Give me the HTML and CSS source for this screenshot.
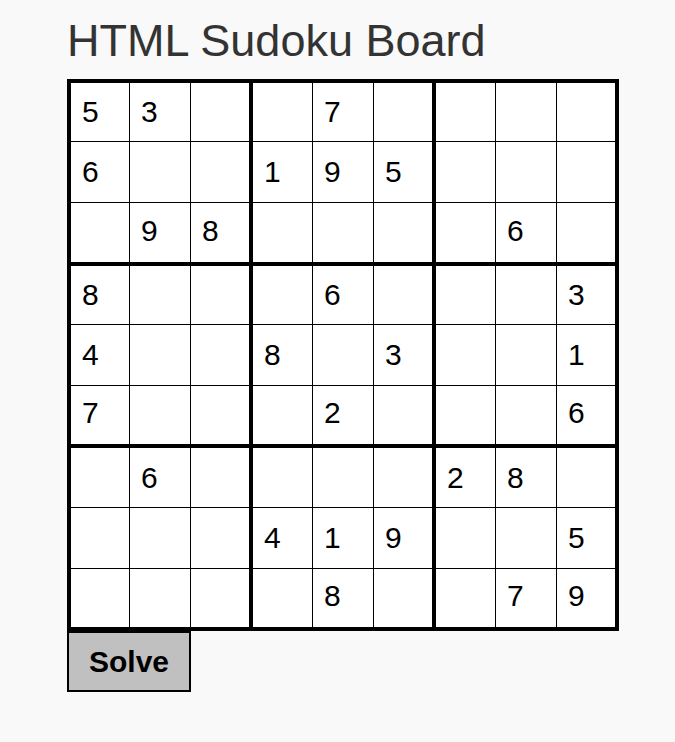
FILE: index.html
```html
<!DOCTYPE html>
<html lang="en">
<head>
<meta charset="utf-8">
<title>HTML Sudoku Board</title>
<link rel="stylesheet" href="styles.css">
</head>
<body>
<div class="page">
  <h1 class="title">HTML Sudoku Board</h1>
  <div class="board">
    <div class="cell">5</div><div class="cell">3</div><div class="cell"></div><div class="cell"></div><div class="cell">7</div><div class="cell"></div><div class="cell"></div><div class="cell"></div><div class="cell"></div>
    <div class="cell">6</div><div class="cell"></div><div class="cell"></div><div class="cell">1</div><div class="cell">9</div><div class="cell">5</div><div class="cell"></div><div class="cell"></div><div class="cell"></div>
    <div class="cell"></div><div class="cell">9</div><div class="cell">8</div><div class="cell"></div><div class="cell"></div><div class="cell"></div><div class="cell"></div><div class="cell">6</div><div class="cell"></div>
    <div class="cell">8</div><div class="cell"></div><div class="cell"></div><div class="cell"></div><div class="cell">6</div><div class="cell"></div><div class="cell"></div><div class="cell"></div><div class="cell">3</div>
    <div class="cell">4</div><div class="cell"></div><div class="cell"></div><div class="cell">8</div><div class="cell"></div><div class="cell">3</div><div class="cell"></div><div class="cell"></div><div class="cell">1</div>
    <div class="cell">7</div><div class="cell"></div><div class="cell"></div><div class="cell"></div><div class="cell">2</div><div class="cell"></div><div class="cell"></div><div class="cell"></div><div class="cell">6</div>
    <div class="cell"></div><div class="cell">6</div><div class="cell"></div><div class="cell"></div><div class="cell"></div><div class="cell"></div><div class="cell">2</div><div class="cell">8</div><div class="cell"></div>
    <div class="cell"></div><div class="cell"></div><div class="cell"></div><div class="cell">4</div><div class="cell">1</div><div class="cell">9</div><div class="cell"></div><div class="cell"></div><div class="cell">5</div>
    <div class="cell"></div><div class="cell"></div><div class="cell"></div><div class="cell"></div><div class="cell">8</div><div class="cell"></div><div class="cell"></div><div class="cell">7</div><div class="cell">9</div>
  </div>
  <button class="solve" type="button">Solve</button>
</div>
</body>
</html>
```

FILE: styles.css
```css
html, body {
  margin: 0;
  padding: 0;
  background: #f9f9f9;
}

body {
  font-family: "Liberation Sans", Arial, sans-serif;
}

.page {
  padding: 0 0 0 67px;
}

.title {
  margin: 15px 0 12px 0;
  font-size: 45px;
  line-height: 52px;
  font-weight: normal;
  color: #333333;
}

.board {
  display: grid;
  width: 552px;
  height: 552px;
  box-sizing: border-box;
  border: 4px solid #000;
  background: #fff;
  grid-template-columns: 59px 61px 62px 60px 61px 62px 60px 61px 58px;
  grid-template-rows: 59px 61px 63px 59px 61px 62px 60px 61px 58px;
}

.cell {
  box-sizing: border-box;
  border-right: 1px solid #000;
  border-bottom: 1px solid #000;
  display: flex;
  align-items: center;
  padding-left: 11px;
  font-size: 30px;
  color: #000;
  background: #fff;
}

.cell:nth-child(3n) {
  border-right-width: 4px;
}

.cell:nth-child(9n) {
  border-right: none;
}

.cell:nth-child(n+19):nth-child(-n+27),
.cell:nth-child(n+46):nth-child(-n+54) {
  border-bottom-width: 4px;
  padding-bottom: 4px;
}

.cell:nth-child(n+73) {
  border-bottom: none;
  padding-bottom: 4px;
}

.solve {
  display: block;
  width: 124px;
  height: 61px;
  box-sizing: border-box;
  margin: 0;
  padding: 0;
  border: 2px solid #000;
  background: #c0c0c0;
  font-family: "Liberation Sans", Arial, sans-serif;
  font-size: 30px;
  font-weight: bold;
  color: #000;
  text-align: center;
}
```
